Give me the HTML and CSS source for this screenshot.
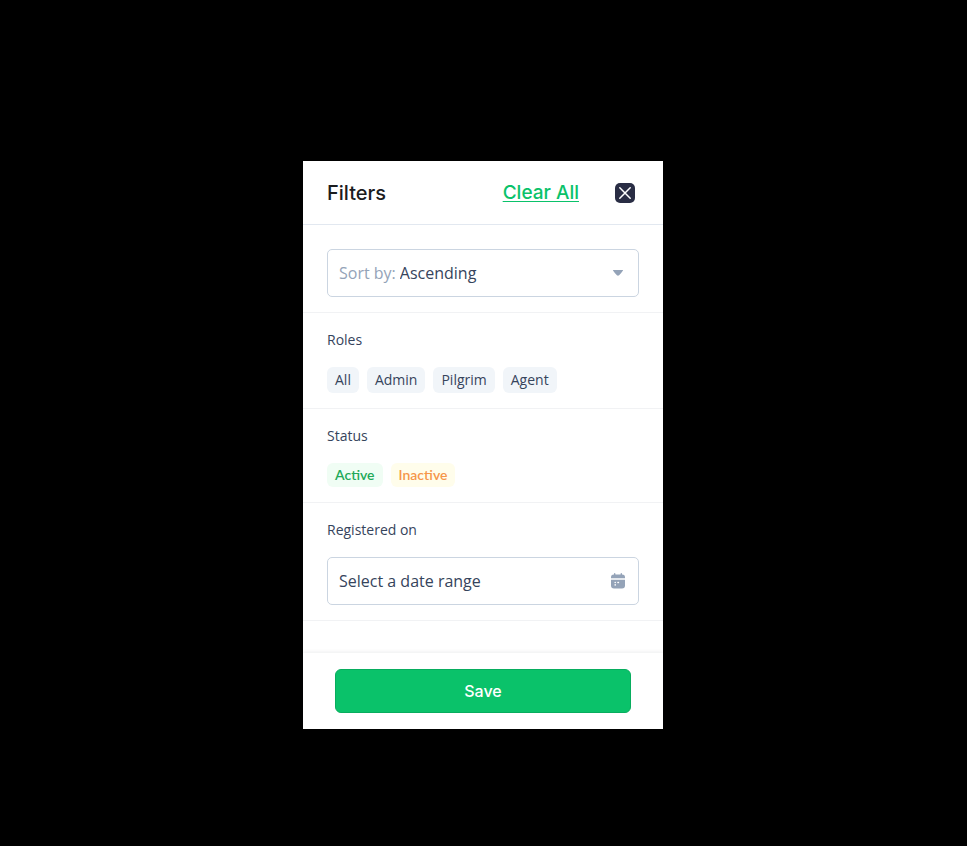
FILE: index.html
```html
<!DOCTYPE html>
<html lang="en">
<head>
<meta charset="utf-8">
<meta name="viewport" content="width=device-width, initial-scale=1">
<title>Filters</title>
<link rel="stylesheet" href="styles.css">
</head>
<body>
<form class="panel">
  <header class="panel-header">
    <h1 class="title">Filters</h1>
    <a class="clear" href="#">Clear All</a>
    <button class="close" type="button" aria-label="Close">
      <svg width="20" height="20" viewBox="0 0 20 20" aria-hidden="true">
        <rect width="20" height="20" rx="5" fill="#292d44"/>
        <path d="M4.8 4.8l10.4 10.4M15.2 4.8L4.8 15.2" stroke="#fff" stroke-width="1.5" stroke-linecap="round"/>
      </svg>
    </button>
  </header>
  <div class="panel-body">
    <section class="section section-sort">
      <div class="field">
        <label class="prefix" for="sort">Sort by:</label>
        <select class="control sort" id="sort">
          <option>Ascending</option>
          <option>Descending</option>
        </select>
        <svg class="icon" width="20" height="20" viewBox="0 0 20 20" aria-hidden="true">
          <path d="M5 7.6Q4.6 7 5.3 7H14.7Q15.4 7 15 7.6Q13.2 10.4 11.1 12.2Q10 13.1 8.9 12.2Q6.8 10.4 5 7.6Z" fill="#94a3b8"/>
        </svg>
      </div>
    </section>
    <section class="section">
      <h2 class="label">Roles</h2>
      <div class="chips">
        <button class="chip" type="button">All</button>
        <button class="chip" type="button">Admin</button>
        <button class="chip" type="button">Pilgrim</button>
        <button class="chip" type="button">Agent</button>
      </div>
    </section>
    <section class="section">
      <h2 class="label">Status</h2>
      <div class="chips">
        <button class="chip status active" type="button">Active</button>
        <button class="chip status inactive" type="button">Inactive</button>
      </div>
    </section>
    <section class="section">
      <label class="label" for="range">Registered on</label>
      <div class="field">
        <input class="control" id="range" type="text" placeholder="Select a date range">
        <svg class="icon" width="20" height="20" viewBox="0 0 20 20" aria-hidden="true">
          <g fill="#94a3b8">
            <path d="M3 7.3V6.4Q3 3.6 5.8 3.6H14.2Q17 3.6 17 6.4V7.3Z"/>
            <path d="M3 8.7H17V14.6Q17 17.6 14 17.6H6Q3 17.6 3 14.6Z"/>
            <path d="M6.7 2.8V4.4M13.3 2.8V4.4" stroke="#94a3b8" stroke-width="1.4" stroke-linecap="round"/>
          </g>
          <g fill="#fff">
            <circle cx="7.2" cy="11.5" r=".8"/>
            <circle cx="7.2" cy="13.9" r=".8"/>
            <rect x="9.2" y="10.8" width="2" height="1.4" rx=".7"/>
          </g>
        </svg>
      </div>
    </section>
  </div>
  <footer class="panel-footer">
    <button class="save" type="submit">Save</button>
  </footer>
</form>
</body>
</html>
```
FILE: styles.css
```css
* {
  box-sizing: border-box;
}

body {
  margin: 0;
  padding: 161px 1px 0 0;
  background: #000;
  color: #36445c;
  font-family: "Open Sans", sans-serif;
}

button,
input,
select {
  font: inherit;
  color: inherit;
}

button {
  border: 0;
  cursor: pointer;
}

svg {
  display: block;
}

.panel {
  max-width: 360px;
  margin: 0 auto;
  background: #fff;
}

.panel-header {
  display: flex;
  align-items: center;
  padding: 16px 28px 15px 24px;
  border-bottom: 1px solid #e2e8f0;
}

.title {
  flex: 1;
  margin: 0;
  color: #1b1c1e;
  font-family: Inter, sans-serif;
  font-size: 20px;
  font-weight: 500;
  line-height: 32px;
}

.clear {
  margin-right: 36px;
  color: #0ac26a;
  font-family: Inter, sans-serif;
  font-size: 19px;
  font-weight: 500;
  line-height: 32px;
  text-decoration-thickness: 1px;
  text-decoration-skip-ink: none;
  text-underline-offset: 2px;
}

.close {
  padding: 0;
  background: none;
}

.panel-body {
  padding-bottom: 32px;
}

.section {
  padding: 16px 24px 15px;
  border-bottom: 1px solid #f1f2f4;
}

.section-sort {
  padding-top: 24px;
}

.label {
  display: block;
  margin: 0 0 16px;
  font-size: 14px;
  font-weight: 400;
  line-height: 22px;
}

.field {
  display: flex;
  align-items: center;
  height: 48px;
  padding: 0 10px 0 11px;
  border: 1px solid #cbd5e1;
  border-radius: 5px;
  font-size: 16px;
}

.prefix {
  margin-right: 4px;
  color: #94a3b8;
}

.control {
  flex: 1;
  min-width: 0;
  height: 100%;
  padding: 0;
  border: 0;
  outline: 0;
  background: none;
  appearance: none;
}

.control::placeholder {
  color: #36445c;
  opacity: 1;
}

.chips {
  display: flex;
  flex-wrap: wrap;
  gap: 8px;
}

.chip {
  padding: 2px 8px;
  border-radius: 6px;
  background: #f1f5f9;
  font-size: 14px;
  line-height: 22px;
}

.status {
  padding-block: 1px;
  font-family: Lato, sans-serif;
  font-weight: 600;
}

.active {
  background: #f0fdf4;
  color: #22a958;
}

.inactive {
  background: #fffdeb;
  color: #f6964a;
}

.panel-footer {
  padding: 16px 32px;
  box-shadow: 0 -1px 4px rgb(15 23 42 / 8%);
}

.save {
  width: 100%;
  padding: 0;
  border: 1px solid #08ad5e;
  border-radius: 6px;
  background: #0ac26a;
  color: #fff;
  font-family: Inter, sans-serif;
  font-size: 16px;
  font-weight: 500;
  line-height: 42px;
}
```
